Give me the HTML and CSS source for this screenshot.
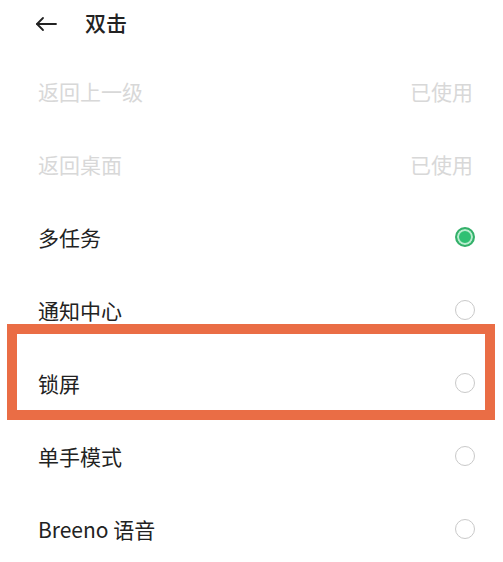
FILE: index.html
```
<!DOCTYPE html>
<html lang="zh-CN">
<head>
    <meta charset="UTF-8">
    <meta name="viewport" content="width=device-width, initial-scale=1.0">
    <title>双击</title>
    <link rel="stylesheet" href="styles.css">
</head>
<body>
    <div class="header">
        <svg class="back" width="22" height="16" viewBox="0 0 22 16" fill="none" stroke="#222" stroke-width="1.8" stroke-linecap="round" stroke-linejoin="round">
            <path d="M21 8H2"></path>
            <path d="M8 2L2 8l6 6"></path>
        </svg>
        <div class="title">双击</div>
    </div>

    <div class="list">
        <div class="row disabled">
            <span class="label">返回上一级</span>
            <span class="state">已使用</span>
        </div>
        <div class="row disabled">
            <span class="label">返回桌面</span>
            <span class="state">已使用</span>
        </div>
        <div class="row">
            <span class="label">多任务</span>
            <span class="radio checked"></span>
        </div>
        <div class="row">
            <span class="label">通知中心</span>
            <span class="radio"></span>
        </div>
        <div class="row marked">
            <span class="label">锁屏</span>
            <span class="radio"></span>
            <div class="highlight"></div>
        </div>
        <div class="row">
            <span class="label">单手模式</span>
            <span class="radio"></span>
        </div>
        <div class="row">
            <span class="label">Breeno 语音</span>
            <span class="radio"></span>
        </div>
    </div>
</body>
</html>
```

FILE: styles.css
```
/* 双击设置页 */
body {
    margin: 0;
    background: #fff;
    color: #222;
    font-family: "Noto Sans CJK SC", "Noto Sans", sans-serif;
    width: 503px;
    height: 562px;
    overflow: hidden;
}

.header {
    height: 43px;
    display: flex;
    align-items: center;
    padding-left: 35px;
    gap: 28px;
}

.back {
    margin-top: 4px;
}

.title {
    font-size: 21px;
    font-weight: 500;
}

.list {
    margin-top: 11px;
}

.row {
    position: relative;
    height: 73px;
    display: flex;
    align-items: center;
    justify-content: space-between;
    padding: 0 28px 0 38px;
    font-size: 21px;
}

.disabled {
    color: #d8d8d8;
}

.state {
    margin-right: 2px;
}

.radio {
    width: 20px;
    height: 20px;
    border-radius: 50%;
    border: 1.5px solid #c9c9c9;
    box-sizing: border-box;
}

.radio.checked {
    border: 2px solid #34b06a;
    background: #2fc073;
    box-shadow: inset 0 0 0 2px #b9ecce;
}

.highlight {
    position: absolute;
    top: -22px;
    left: 7px;
    right: 8px;
    height: 96px;
    box-sizing: border-box;
    border: 10px solid #ea6d45;
}
```
